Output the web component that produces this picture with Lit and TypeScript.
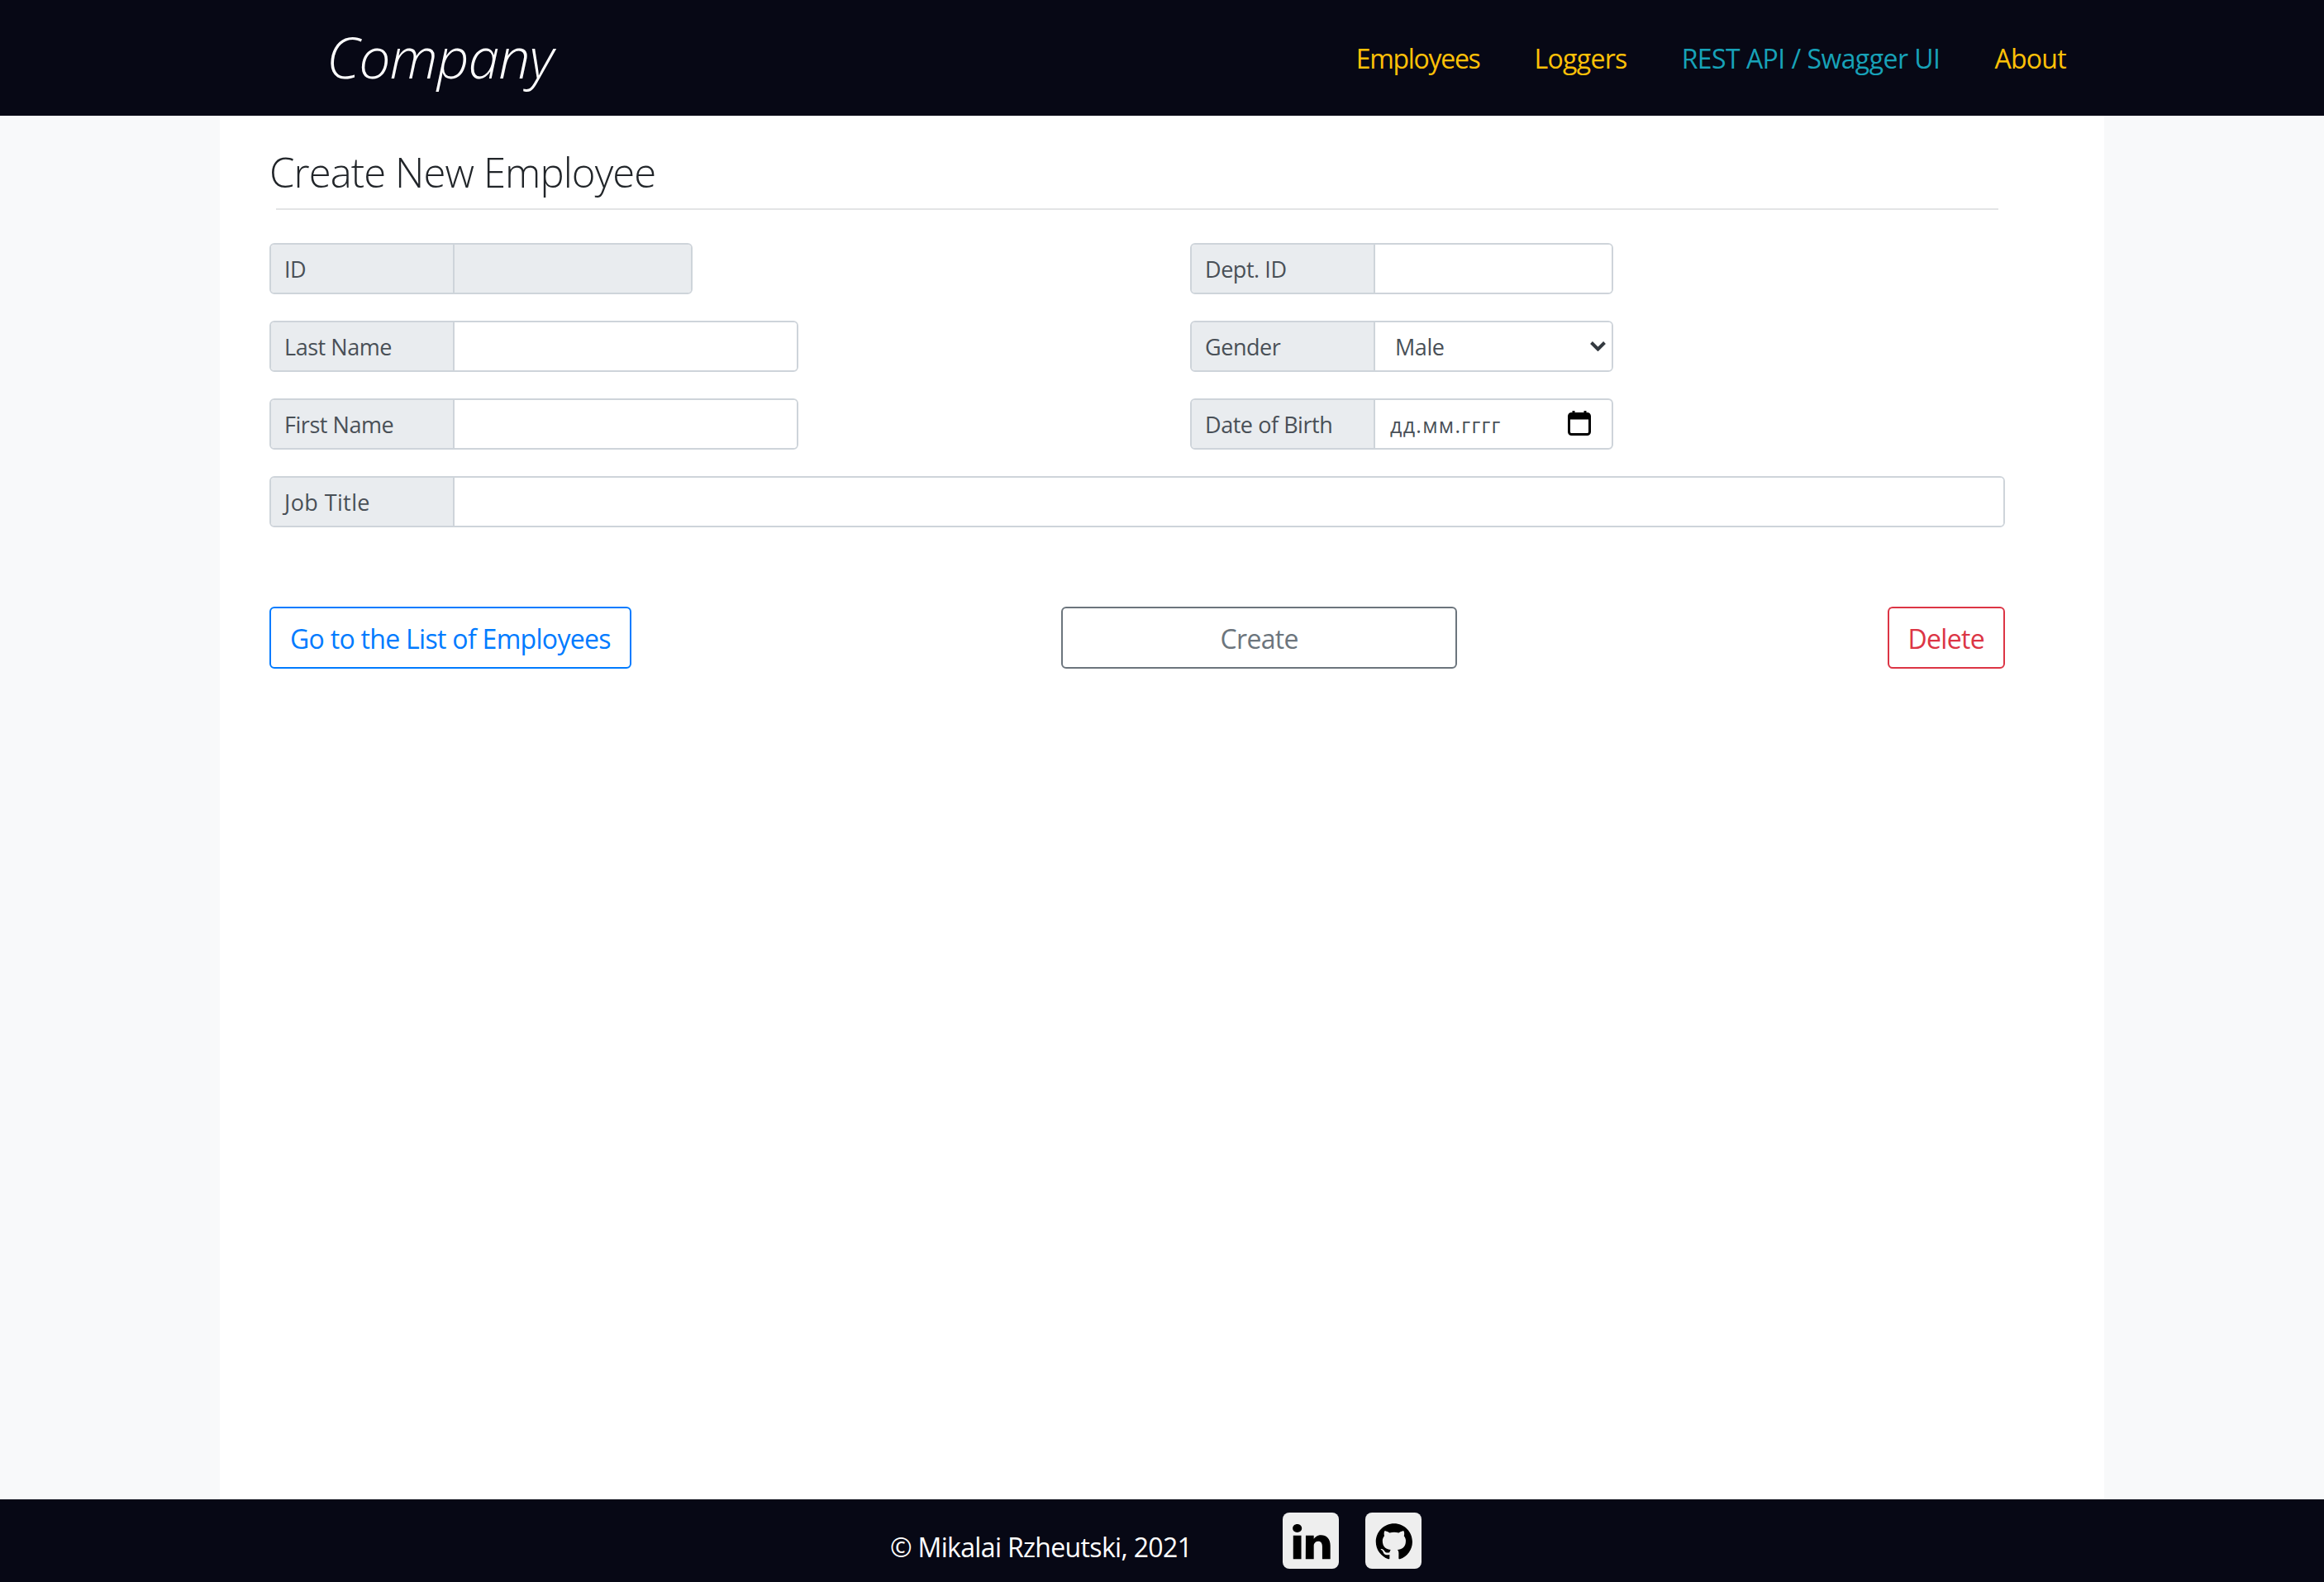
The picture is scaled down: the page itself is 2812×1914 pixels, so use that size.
import { LitElement, html, css, svg } from 'lit';
import { customElement } from 'lit/decorators.js';

const BOX = svg`<rect width="16" height="16" rx="1.9" fill="#eeeeee"/>`;
const LINKEDIN = svg`${BOX}<g transform="translate(1 1.19) scale(.87 .85)"><path fill="#000" d="M4.94 14.2V6.3H2.3v7.9h2.64zM3.62 5.22c.92 0 1.5-.6 1.5-1.37-.02-.78-.58-1.37-1.48-1.37-.9 0-1.5.59-1.5 1.37 0 .76.58 1.37 1.46 1.37h.02zM6.4 14.2h2.64V9.79c0-.24.02-.47.09-.64.19-.47.62-.96 1.35-.96.95 0 1.33.72 1.33 1.78v4.23h2.64V9.67c0-2.43-1.3-3.56-3.03-3.56-1.4 0-2.03.77-2.38 1.31v.03h-.02l.02-.03V6.3H6.4c.03.74 0 7.9 0 7.9z"/></g>`;
const GITHUB = svg`${BOX}<g transform="translate(3 3.1) scale(.65)"><path fill="#000" d="M8 0C3.58 0 0 3.58 0 8c0 3.54 2.29 6.53 5.47 7.59.4.07.55-.17.55-.38 0-.19-.01-.82-.01-1.49-2.01.37-2.53-.49-2.69-.94-.09-.23-.48-.94-.82-1.13-.28-.15-.68-.52-.01-.53.63-.01 1.08.58 1.23.82.72 1.21 1.87.87 2.33.66.07-.52.28-.87.51-1.07-1.78-.2-3.64-.89-3.64-3.95 0-.87.31-1.59.82-2.15-.08-.2-.36-1.02.08-2.12 0 0 .67-.21 2.2.82.64-.18 1.32-.27 2-.27s1.36.09 2 .27c1.53-1.04 2.2-.82 2.2-.82.44 1.1.16 1.92.08 2.12.51.56.82 1.27.82 2.15 0 3.07-1.87 3.75-3.65 3.95.29.25.54.73.54 1.48 0 1.07-.01 1.93-.01 2.2 0 .21.15.46.55.38A8.01 8.01 0 0 0 16 8c0-4.42-3.58-8-8-8z"/></g>`;

@customElement('app-root')
export class AppRoot extends LitElement {
  static styles = css`
    :host {
      display: flex;
      flex-direction: column;
      min-height: 1914px;
      background: #f8f9fa;
      font-family: 'Open Sans', 'Noto Sans', sans-serif;
      color: #495057;
    }

    .topbar {
      height: 140px;
      background: #070815;
      display: flex;
      align-items: center;
      justify-content: space-between;
      padding: 0 312px 0 395px;
      flex: none;
    }

    .brand {
      color: #fff;
      font-size: 68px;
      font-style: italic;
      font-weight: 300;
      letter-spacing: -1px;
      margin-top: -4px;
    }

    .nav {
      display: flex;
      gap: 66px;
      font-size: 32px;
      letter-spacing: -0.7px;
    }

    .nav a { color: #ffc107; }
    .nav a.tight { letter-spacing: -1.3px; }
    .nav a.api { color: #17a2b8; letter-spacing: -0.55px; }

    .content {
      flex: 1;
      width: 2280px;
      box-sizing: border-box;
      margin-left: 266px;
      background: #fff;
      padding: 32px 120px 0 60px;
    }

    h1 {
      margin: 0;
      font-size: 49px;
      font-weight: 300;
      line-height: 72px;
      color: #212529;
      letter-spacing: -0.9px;
    }

    hr {
      border: 0;
      height: 2px;
      background: #e3e4e5;
      margin: 8px 8px 40px 8px;
    }

    .form {
      display: grid;
      grid-template-columns: 1114px 1fr;
      row-gap: 32px;
    }

    .group {
      display: flex;
      height: 62px;
      box-sizing: border-box;
      border: 2px solid #ced4da;
      border-radius: 6px;
      font-size: 27px;
      letter-spacing: -0.45px;
      overflow: hidden;
    }

    .group.narrow { width: 512px; }
    .group.mid { width: 640px; }
    .group.full { grid-column: 1 / -1; }
    .group.full .label { letter-spacing: 0.4px; }

    .label {
      flex: none;
      width: 222px;
      box-sizing: border-box;
      padding-left: 16px;
      background: #e9ecef;
      border-right: 2px solid #ced4da;
      display: flex;
      align-items: center;
    }

    .field {
      flex: 1;
      min-width: 0;
      border: 0;
      outline: 0;
      padding: 0 16px;
      background: #fff;
      font: inherit;
      letter-spacing: inherit;
      color: inherit;
    }

    .field.off { background: #e9ecef; }

    .select-wrap {
      flex: 1;
      position: relative;
      display: flex;
    }

    select.field {
      appearance: none;
      padding-left: 24px;
    }

    .chevron {
      position: absolute;
      right: 7px;
      top: 23px;
      width: 19px;
      height: 12px;
    }

    .date {
      flex: 1;
      display: flex;
      align-items: center;
      justify-content: space-between;
      padding: 2px 25px 0 18px;
      font-size: 25px;
      letter-spacing: 1.3px;
    }

    .date svg { width: 28px; height: 30px; margin-top: -4px; }

    .actions {
      display: flex;
      justify-content: space-between;
      margin-top: 96px;
    }

    .btn {
      height: 75px;
      box-sizing: border-box;
      border: 2px solid;
      border-radius: 6px;
      background: #fff;
      font: inherit;
      font-size: 32px;
      letter-spacing: -0.7px;
      padding: 2px 23px 0;
    }

    .btn.list { color: #007bff; border-color: #007bff; }
    .btn.create { color: #6c757d; border-color: #6c757d; width: 479px; }
    .btn.del { color: #dc3545; border-color: #dc3545; }

    .foot {
      height: 100px;
      flex: none;
      background: #070815;
      color: #fff;
      display: flex;
      padding-left: 1077px;
      box-sizing: border-box;
    }

    .foot .copy {
      font-size: 32px;
      letter-spacing: -0.67px;
      width: 475px;
      padding-top: 36px;
      line-height: 44px;
    }

    .foot .links {
      display: flex;
      gap: 32px;
      padding-top: 16px;
    }

    .foot svg { width: 68px; height: 68px; display: block; }
  `;

  render() {
    return html`
      <header class="topbar">
        <span class="brand">Company</span>
        <nav class="nav">
          <a class="tight">Employees</a>
          <a>Loggers</a>
          <a class="api">REST API / Swagger UI</a>
          <a>About</a>
        </nav>
      </header>

      <main class="content">
        <h1>Create New Employee</h1>
        <hr />
        <div class="form">
          <div class="group narrow">
            <span class="label">ID</span>
            <input class="field off" disabled />
          </div>
          <div class="group narrow">
            <span class="label">Dept. ID</span>
            <input class="field" />
          </div>
          <div class="group mid">
            <span class="label">Last Name</span>
            <input class="field" />
          </div>
          <div class="group narrow">
            <span class="label">Gender</span>
            <div class="select-wrap">
              <select class="field"><option>Male</option><option>Female</option></select>
              <svg class="chevron" viewBox="0 0 19 12"><path d="M1.5 1.5l8 8 8-8" fill="none" stroke="#343a40" stroke-width="4"/></svg>
            </div>
          </div>
          <div class="group mid">
            <span class="label">First Name</span>
            <input class="field" />
          </div>
          <div class="group narrow">
            <span class="label">Date of Birth</span>
            <div class="date">
              <span>дд.мм.гггг</span>
              <svg viewBox="0 0 28 30"><path d="M7 .5v5M21 .5v5" stroke="#000" stroke-width="3" stroke-linecap="round"/><rect x="1.5" y="3.5" width="25" height="25" rx="3" fill="none" stroke="#000" stroke-width="3"/><rect x="1.5" y="3.5" width="25" height="7" fill="#000"/></svg>
            </div>
          </div>
          <div class="group full">
            <span class="label">Job Title</span>
            <input class="field" />
          </div>
        </div>
        <div class="actions">
          <button class="btn list">Go to the List of Employees</button>
          <button class="btn create">Create</button>
          <button class="btn del">Delete</button>
        </div>
      </main>

      <footer class="foot">
        <span class="copy">© Mikalai Rzheutski, 2021</span>
        <div class="links">
          <svg viewBox="0 0 16 16">${LINKEDIN}</svg>
          <svg viewBox="0 0 16 16">${GITHUB}</svg>
        </div>
      </footer>
    `;
  }
}
